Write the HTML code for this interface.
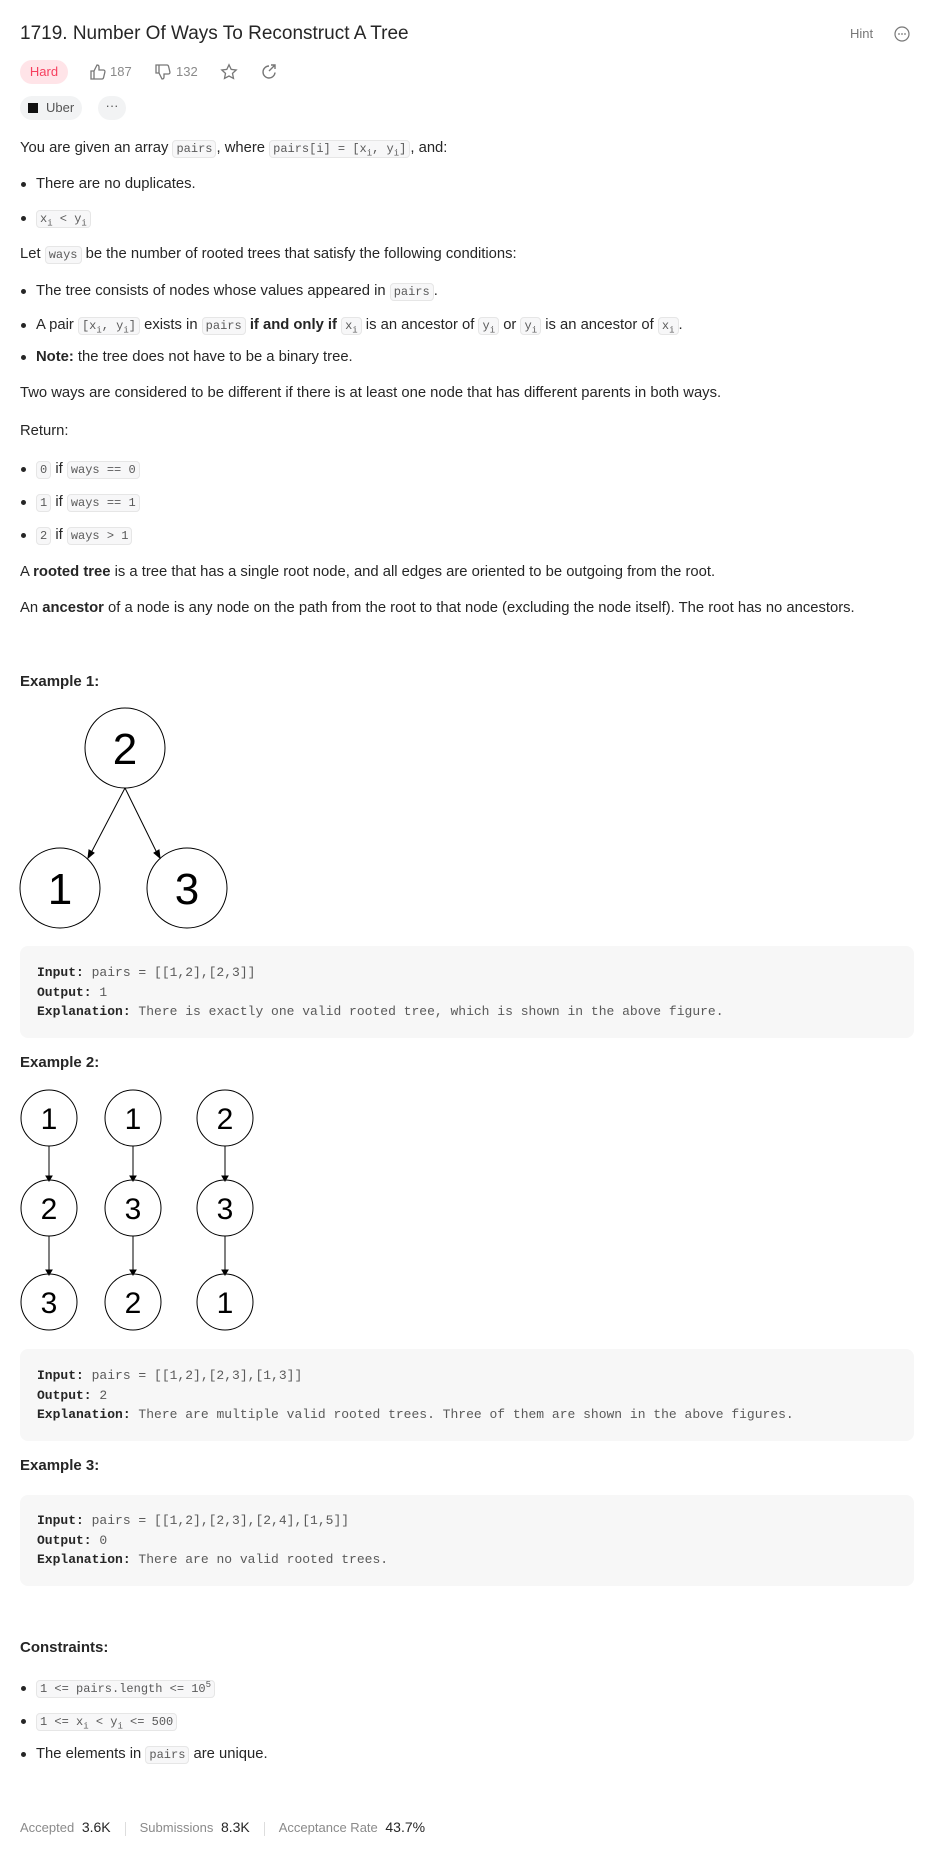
<!DOCTYPE html>
<html><head><meta charset="utf-8"><style>
*{margin:0;padding:0;box-sizing:border-box}
body{width:933px;height:1849px;background:#fff;font-family:"Liberation Sans",sans-serif;color:#262626;position:relative;overflow:hidden}
.a{position:absolute;left:20px;white-space:nowrap;font-size:14.8px;line-height:24px;height:24px}
.li{left:36px}
.li:before{content:"";position:absolute;left:-15px;top:10px;width:5px;height:5px;border-radius:50%;background:#262626}
code{font-family:"Liberation Mono",monospace;font-size:12px;color:#5a5a5a;background:#f7f7f8;border:1px solid #e6e6e6;border-radius:4px;padding:1px 3px;line-height:16px}
sub,sup{font-size:9px;line-height:0}
b{font-weight:bold}
h4{position:absolute;left:20px;font-size:15px;font-weight:bold}
.pre{position:absolute;left:20px;width:894px;background:#f7f7f7;border-radius:8px;font-family:"Liberation Mono",monospace;font-size:13px;color:#5a5a5a;line-height:19.5px;padding:0 0 0 17px}
.pre b{color:#262626}
svg text{font-family:"Liberation Sans",sans-serif}
.chip{position:absolute;height:24px;border-radius:12px;background:#f2f3f4;font-size:13px;color:#555;line-height:24px}
.gray{color:#8a8a8a;font-size:13px}
</style></head><body>
<div class="a" style="top:21px;font-size:19px;line-height:26px;height:26px">1719. Number Of Ways To Reconstruct A Tree</div>
<div style="position:absolute;left:850px;top:26px;font-size:13px;color:#777">Hint</div>
<svg style="position:absolute;left:894px;top:26px" width="16" height="16"><circle cx="8" cy="8" r="7" fill="none" stroke="#777" stroke-width="1.2"/><circle cx="5" cy="8" r=".9" fill="#777"/><circle cx="8" cy="8" r=".9" fill="#777"/><circle cx="11" cy="8" r=".9" fill="#777"/></svg>
<div class="chip" style="left:20px;top:60px;width:48px;background:#ffe4e8;color:#f63f5e;text-align:center">Hard</div>
<svg style="position:absolute;left:89px;top:63px" width="18" height="18" fill="none" stroke="#777" stroke-width="1.3"><path d="M2 8h3v8H2zM5 8l3-6c1.5 0 2 1 2 2v3h4.5c1 0 1.6 1 1.4 2l-1.3 5.5c-.2.8-.8 1.5-1.6 1.5H5"/></svg>
<div class="gray" style="position:absolute;left:110px;top:64px">187</div>
<svg style="position:absolute;left:154px;top:63px" width="18" height="18" fill="none" stroke="#777" stroke-width="1.3"><path d="M2 2h3v8H2zM5 10l3 6c1.5 0 2-1 2-2v-3h4.5c1 0 1.6-1 1.4-2L14.6 3.5C14.4 2.7 13.8 2 13 2H5"/></svg>
<div class="gray" style="position:absolute;left:176px;top:64px">132</div>
<svg style="position:absolute;left:220px;top:63px" width="18" height="18" fill="none" stroke="#777" stroke-width="1.3"><path d="M9 1.8l2.2 4.6 5 .6-3.7 3.4 1 5L9 13l-4.5 2.4 1-5L1.8 7l5-.6z"/></svg>
<svg style="position:absolute;left:260px;top:63px" width="18" height="18" fill="none" stroke="#777" stroke-width="1.4"><path d="M15 9.5A6 6 0 1 1 9 3M11 2h4v4M15 2l-6 6"/></svg>
<div class="chip" style="left:20px;top:96px;width:62px"><span style="position:absolute;left:8px;top:7px;width:10px;height:10px;background:#111"></span><span style="position:absolute;left:26px;top:0">Uber</span></div>
<div class="chip" style="left:98px;top:96px;width:28px;text-align:center;line-height:20px">···</div>

<div class="a" style="top:136px">You are given an array <code>pairs</code>, where <code>pairs[i] = [x<sub>i</sub>, y<sub>i</sub>]</code>, and:</div>
<div class="a li" style="top:172px">There are no duplicates.</div>
<div class="a li" style="top:206px"><code>x<sub>i</sub> &lt; y<sub>i</sub></code></div>
<div class="a" style="top:242px">Let <code>ways</code> be the number of rooted trees that satisfy the following conditions:</div>
<div class="a li" style="top:279px">The tree consists of nodes whose values appeared in <code>pairs</code>.</div>
<div class="a li" style="top:313px">A pair <code>[x<sub>i</sub>, y<sub>i</sub>]</code> exists in <code>pairs</code> <b>if and only if</b> <code>x<sub>i</sub></code> is an ancestor of <code>y<sub>i</sub></code> or <code>y<sub>i</sub></code> is an ancestor of <code>x<sub>i</sub></code>.</div>
<div class="a li" style="top:345px"><b>Note:</b> the tree does not have to be a binary tree.</div>
<div class="a" style="top:381px">Two ways are considered to be different if there is at least one node that has different parents in both ways.</div>
<div class="a" style="top:419px">Return:</div>
<div class="a li" style="top:457px"><code>0</code> if <code>ways == 0</code></div>
<div class="a li" style="top:490px"><code>1</code> if <code>ways == 1</code></div>
<div class="a li" style="top:523px"><code>2</code> if <code>ways &gt; 1</code></div>
<div class="a" style="top:560px">A <b>rooted tree</b> is a tree that has a single root node, and all edges are oriented to be outgoing from the root.</div>
<div class="a" style="top:596px">An <b>ancestor</b> of a node is any node on the path from the root to that node (excluding the node itself). The root has no ancestors.</div>

<h4 style="top:673px">Example 1:</h4>
<svg style="position:absolute;left:0;top:700px" width="300" height="240" fill="none" stroke="#000" stroke-width="1">
<circle cx="125" cy="48" r="40"/><circle cx="60" cy="188" r="40"/><circle cx="187" cy="188" r="40"/>
<path d="M125 88L91 153M125 88L157 153"/><path d="M88 158l1-8 5 3z M160 158l-1-8-5 3z" fill="#000"/>
<g fill="#000" stroke="none" font-size="44" text-anchor="middle"><text x="125" y="64">2</text><text x="60" y="204">1</text><text x="187" y="204">3</text></g>
</svg>
<div class="pre" style="top:946px;height:92px;padding-top:17px"><b>Input:</b> pairs = [[1,2],[2,3]]<br><b>Output:</b> 1<br><b>Explanation:</b> There is exactly one valid rooted tree, which is shown in the above figure.</div>

<h4 style="top:1054px">Example 2:</h4>
<svg style="position:absolute;left:0;top:1080px" width="300" height="260" fill="none" stroke="#000" stroke-width="1">
<g><circle cx="49" cy="38" r="28"/><circle cx="49" cy="128" r="28"/><circle cx="49" cy="222" r="28"/>
<circle cx="133" cy="38" r="28"/><circle cx="133" cy="128" r="28"/><circle cx="133" cy="222" r="28"/>
<circle cx="225" cy="38" r="28"/><circle cx="225" cy="128" r="28"/><circle cx="225" cy="222" r="28"/></g>
<path d="M49 66v32M49 156v36M133 66v32M133 156v36M225 66v32M225 156v36"/>
<path d="M46 96h6l-3 5zM46 190h6l-3 5zM130 96h6l-3 5zM130 190h6l-3 5zM222 96h6l-3 5zM222 190h6l-3 5z" fill="#000"/>
<g fill="#000" stroke="none" font-size="30" text-anchor="middle">
<text x="49" y="49">1</text><text x="49" y="139">2</text><text x="49" y="233">3</text>
<text x="133" y="49">1</text><text x="133" y="139">3</text><text x="133" y="233">2</text>
<text x="225" y="49">2</text><text x="225" y="139">3</text><text x="225" y="233">1</text></g>
</svg>
<div class="pre" style="top:1349px;height:92px;padding-top:17px"><b>Input:</b> pairs = [[1,2],[2,3],[1,3]]<br><b>Output:</b> 2<br><b>Explanation:</b> There are multiple valid rooted trees. Three of them are shown in the above figures.</div>

<h4 style="top:1457px">Example 3:</h4>
<div class="pre" style="top:1495px;height:91px;padding-top:16px"><b>Input:</b> pairs = [[1,2],[2,3],[2,4],[1,5]]<br><b>Output:</b> 0<br><b>Explanation:</b> There are no valid rooted trees.</div>

<h4 style="top:1639px">Constraints:</h4>
<div class="a li" style="top:1676px"><code>1 &lt;= pairs.length &lt;= 10<sup>5</sup></code></div>
<div class="a li" style="top:1709px"><code>1 &lt;= x<sub>i</sub> &lt; y<sub>i</sub> &lt;= 500</code></div>
<div class="a li" style="top:1742px">The elements in <code>pairs</code> are unique.</div>

<div class="a" style="top:1815px;font-size:13px;color:#8a8a8a">Accepted <span style="color:#262626;font-size:14px;margin-left:4px">3.6K</span><span style="display:inline-block;width:1px;height:14px;background:#ddd;margin:0 14px;vertical-align:middle"></span>Submissions <span style="color:#262626;font-size:14px;margin-left:4px">8.3K</span><span style="display:inline-block;width:1px;height:14px;background:#ddd;margin:0 14px;vertical-align:middle"></span>Acceptance Rate <span style="color:#262626;font-size:14px;margin-left:4px">43.7%</span></div>
</body></html>
